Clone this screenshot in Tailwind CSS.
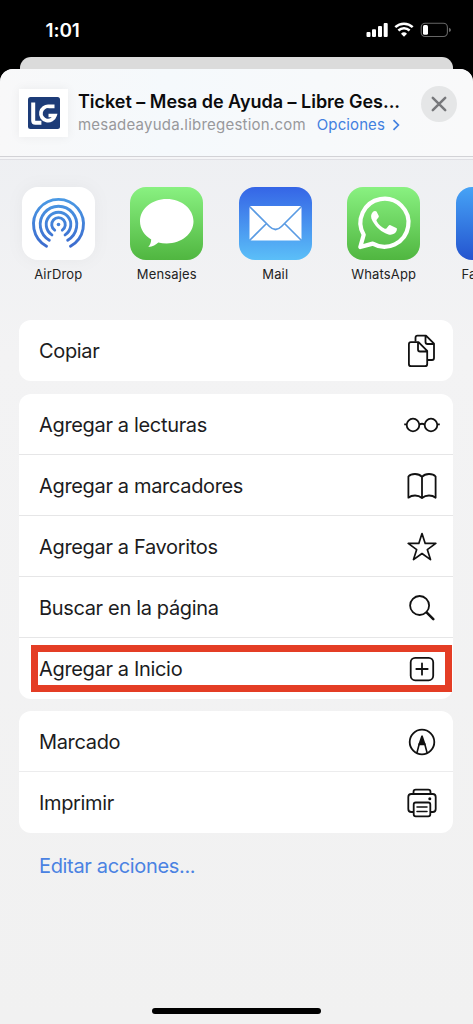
<!DOCTYPE html>
<html lang="es">
<head>
<meta charset="utf-8">
<title>Compartir</title>
<script src="https://cdn.jsdelivr.net/npm/@tailwindcss/browser@4"></script>
</head>
<body class="bg-black">
<div class="relative flex h-[1024px] w-[473px] flex-col overflow-hidden bg-black font-['Inter','Liberation_Sans',sans-serif] text-[#1c1c1e]">

  <!-- Status bar -->
  <div class="flex h-[57px] shrink-0 items-start justify-between pt-[21px] pr-[22px] pl-[45.500px] text-white">
    <span class="text-[19px] leading-[20px] font-semibold tracking-[-0.1px]">1:01</span>
    <svg class="mt-px h-[16px] w-[85px]" viewBox="366 22 85 16" fill="none">
      <g fill="#fff"><rect x="366.500" y="32" width="4" height="5" rx="1"/><rect x="372" y="29.300" width="4" height="7.700" rx="1"/><rect x="378" y="26" width="4" height="11" rx="1"/><rect x="383.700" y="23" width="4" height="14" rx="1"/></g>
      <path d="M395.300 27.200a12.700 12.700 0 0 1 17.400 0M398.400 30.500a8.200 8.200 0 0 1 11.200 0" stroke="#fff" stroke-width="2.500"/>
      <path d="M404 36.700l-3-3a4.300 4.300 0 0 1 6 0z" fill="#fff"/>
      <rect x="421.200" y="23.200" width="26.200" height="13.300" rx="4" stroke="#666" stroke-width="1.100"/>
      <rect x="423" y="25" width="5" height="9.700" rx="1.500" fill="#fff"/>
      <path d="M449 27.800q2 .8 2 2.100t-2 2.100z" fill="#666"/>
    </svg>
  </div>

  <!-- Card behind the sheet -->
  <div class="mx-5 h-3 shrink-0 rounded-t-[11px] bg-[#dbdbdb]"></div>

  <!-- Share sheet -->
  <div class="flex flex-1 flex-col rounded-t-[13px] bg-linear-to-b from-[#eceef2] via-[#f3f3f4] via-30% to-[#f1f1f1]">
    <header class="flex h-[88px] shrink-0 items-start rounded-t-[13px] border-b border-[#d2d2d6] bg-linear-to-r from-[#f8f8f9] via-[#f5f9fc] via-35% to-[#f9f9fa] pt-5 pl-[19px]">
      <div class="flex h-[48px] w-[49px] shrink-0 items-center justify-center bg-white shadow-[0_0_10px_rgba(0,0,0,0.06)]">
        <svg class="h-[32px] w-[32px]" viewBox="0 0 32 32" fill="none">
          <rect width="32" height="32" rx="2.500" fill="#1d3c78"/>
          <path d="M5.200 5.500v18q0 2.200 2.200 2.200h6" stroke="#fff" stroke-width="4"/>
          <path d="M26.500 9.300H21a7.200 7.200 0 1 0 6 9.200h-6.500" stroke="#fff" stroke-width="3.700"/>
        </svg>
      </div>
      <div class="ml-[10px] w-[330px] pt-[2px] whitespace-nowrap">
        <div class="text-[18px] leading-[22px] font-semibold tracking-[-0.02px] text-[#0b0b0c]">Ticket – Mesa de Ayuda – Libre Ges...</div>
        <div class="mt-px flex items-center text-[15px] leading-[22px]">
          <span class="tracking-[0.22px] text-[#98989b]">mesadeayuda.libregestion.com</span>
          <span class="ml-[11px] tracking-[0.1px] text-[#4280e0]">Opciones</span>
          <svg class="ml-[7px] h-[12px] w-[8px]" viewBox="0 0 8 12" fill="none"><path d="M1.500 1.200L6.400 6l-4.900 4.800" stroke="#4280e0" stroke-width="1.700"/></svg>
        </div>
      </div>
      <div class="mt-[-3px] ml-[13px] flex h-9 w-9 shrink-0 items-center justify-center rounded-full bg-[#e5e6e7]">
        <svg class="h-4 w-4" viewBox="0 0 16 16"><path d="M1.800 1.800l12.400 12.400M14.200 1.800L1.800 14.200" stroke="#77787b" stroke-width="2.500" stroke-linecap="round"/></svg>
      </div>
    </header>
    <div class="h-[2px] shrink-0 bg-[#f5f5f7]"></div>

    <!-- App row -->
    <div class="flex h-[161px] shrink-0 gap-[8px] overflow-hidden border-t border-[#dfdfe4] pt-[27px] pl-[8px] text-center text-[13px] leading-[18px] tracking-[0.15px] text-[#222]">
      <div class="flex w-[100.500px] shrink-0 flex-col items-center">
        <svg class="h-[73px] w-[73px] drop-shadow-[0_0_8px_rgba(0,0,0,0.04)]" viewBox="0 0 73 73" fill="none">
          <defs><linearGradient id="air" gradientUnits="userSpaceOnUse" x1="0" y1="10" x2="0" y2="62"><stop stop-color="#4b9be5"/><stop offset="1" stop-color="#3b69cd"/></linearGradient></defs>
          <rect width="73" height="73" rx="16" fill="#fff"/>
          <circle cx="36.500" cy="37.500" r="1.800" fill="url(#air)"/>
          <g stroke="url(#air)" stroke-width="2.900" stroke-linecap="round">
            <path d="M32.700 43.100a6.800 6.800 0 1 1 7.600 0"/>
            <path d="M29.900 47.900a12.300 12.300 0 1 1 13.200 0"/>
            <path d="M27.300 53.300a18.300 18.300 0 1 1 18.400 0"/>
            <path d="M24.500 59.300a25 25 0 1 1 24 0"/>
          </g>
        </svg>
        <span class="mt-[5px]">AirDrop</span>
      </div>
      <div class="flex w-[100.500px] shrink-0 flex-col items-center">
        <svg class="h-[73px] w-[73px]" viewBox="0 0 73 73">
          <defs><linearGradient id="green" x2="0" y2="1"><stop stop-color="#89f181"/><stop offset="1" stop-color="#50b640"/></linearGradient></defs>
          <rect width="73" height="73" rx="16" fill="url(#green)"/>
          <path d="M36.700 12C22 12 10 21.800 10 34.300c0 7.600 4.400 14.300 11.200 18.200-.1 3-1.300 5.500-2.900 7.500 4.200.1 7.700-2.300 10-4.500 2.600.7 5.400 1 8.400 1C51.500 56.500 63.500 46.700 63.500 34.300S51.500 12 36.700 12z" fill="#fff"/>
        </svg>
        <span class="mt-[5px]">Mensajes</span>
      </div>
      <div class="flex w-[100.500px] shrink-0 flex-col items-center">
        <svg class="h-[73px] w-[73px]" viewBox="0 0 73 73" fill="none">
          <defs><linearGradient id="mail" x2="0" y2="1"><stop stop-color="#3565e6"/><stop offset="1" stop-color="#5bbff8"/></linearGradient></defs>
          <rect width="73" height="73" rx="16" fill="url(#mail)"/>
          <rect x="10.500" y="19" width="52" height="34.500" rx="2" fill="#fff"/>
          <path d="M11 20l19.500 19.500q6 6 12 0L62 20M11 53l16.500-16.500M62 53L45.500 36.500" stroke="#5a9be3" stroke-width="1.700"/>
        </svg>
        <span class="mt-[5px]">Mail</span>
      </div>
      <div class="flex w-[100.500px] shrink-0 flex-col items-center">
        <svg class="h-[73px] w-[73px]" viewBox="0 0 73 73" fill="none">
          <rect width="73" height="73" rx="16" fill="url(#green)"/>
          <path d="M13.300 60l3.400-12.300a24 24 0 1 1 9 8.900z" stroke="#fff" stroke-width="4.200" stroke-linejoin="round"/>
          <path d="M29.500 24.400c-.7-.7-2.600-.8-3.700.5-2.200 2.300-2.300 5.500-.3 9 3.600 6.300 9 11.200 16 13.500 3.600 1.100 7.200-.8 8.200-3.800.4-1.500.3-2.100-.4-2.500l-5.800-2.900c-.8-.4-1.300-.2-1.900.6l-2.200 2.600c-.4.500-.9.600-1.600.3-3.600-1.500-6.400-4.200-8.200-7.600-.3-.6-.2-1 .2-1.500l1.800-2.300c.3-.5.3-1 .1-1.500z" fill="#fff"/>
        </svg>
        <span class="mt-[5px]">WhatsApp</span>
      </div>
      <div class="flex w-[100.500px] shrink-0 flex-col items-center">
        <svg class="h-[73px] w-[73px]" viewBox="0 0 73 73">
          <defs><linearGradient id="fb" x2="0" y2="1"><stop stop-color="#46a3f6"/><stop offset="1" stop-color="#2454cf"/></linearGradient></defs>
          <rect width="73" height="73" rx="16" fill="url(#fb)"/>
        </svg>
        <span class="mt-[5px]">Facebook</span>
      </div>
    </div>

    <!-- Actions -->
    <main class="flex flex-col pr-[20px] pl-[19px] text-[20px] tracking-[-0.34px]">
      <section class="rounded-xl bg-white">
        <div class="flex h-[61px] items-center justify-between pr-[13px] pl-5">
          <span>Copiar</span>
          <svg class="h-9 w-9" viewBox="0 0 36 36" fill="none" stroke="#111" stroke-width="1.800" stroke-linejoin="round">
            <path d="M11.500 8.500V4.700q0-2 2-2h8.500l8 8V25q0 2-2 2h-4.500M21.500 3v6q0 2 2 2H30"/>
            <path d="M6.900 9.200h7.600l8.700 8.700v13q0 2.300-2.300 2.300H7.200q-2.300 0-2.300-2.300V11.200q0-2 2-2zM14 9.500v7q0 2 2 2h7"/>
          </svg>
        </div>
      </section>

      <section class="mt-[13px] divide-y divide-[#e6e6e7] rounded-xl bg-white">
        <div class="flex h-[61px] items-center justify-between pt-px pr-[13px] pl-5">
          <span>Agregar a lecturas</span>
          <svg class="h-9 w-9" viewBox="0 0 36 36" fill="none" stroke="#111" stroke-width="1.800">
            <circle cx="9" cy="18" r="6.300"/><circle cx="27" cy="18" r="6.300"/>
            <path d="M15.300 17.500q2.700-1.500 5.400 0M2.900 17.300H.2M33.100 17.300h2.700"/>
          </svg>
        </div>
        <div class="flex h-[61px] items-center justify-between pt-[2px] pr-[13px] pl-5">
          <span>Agregar a marcadores</span>
          <svg class="h-9 w-9" viewBox="0 0 36 36" fill="none" stroke="#111" stroke-width="1.800" stroke-linejoin="round">
            <path d="M18 8.800Q15.500 6 11 6T4.400 8.500V29.700Q7 27.500 11 27.500T18 30Q21 27.500 25 27.500T31.600 29.700V8.500Q29.500 6 25 6T18 8.800zM18 8.800V30"/>
          </svg>
        </div>
        <div class="flex h-[61px] items-center justify-between pt-[2px] pr-[13px] pl-5">
          <span>Agregar a Favoritos</span>
          <svg class="h-9 w-9" viewBox="0 0 36 36" fill="none" stroke="#111" stroke-width="1.700" stroke-linejoin="round">
            <path d="M18 4.500l3.200 9.900h10.600l-8.500 6.200 3.200 10L18 24.500l-8.500 6.100 3.200-10-8.500-6.200h10.600z"/>
          </svg>
        </div>
        <div class="flex h-[61px] items-center justify-between pt-[2px] pr-[13px] pl-5">
          <span>Buscar en la página</span>
          <svg class="h-9 w-9" viewBox="0 0 36 36" fill="none" stroke="#111" stroke-linecap="round">
            <circle cx="15.600" cy="15.500" r="9.500" stroke-width="1.800"/><path d="M22.800 22.600l6.500 6.500" stroke-width="2.600"/>
          </svg>
        </div>
        <div class="relative flex h-[61px] items-center justify-between pt-px pr-[13px] pl-5">
          <span>Agregar a Inicio</span>
          <svg class="h-9 w-9" viewBox="0 0 36 36" fill="none" stroke="#111" stroke-width="1.800" stroke-linecap="round">
            <rect x="6.700" y="6.800" width="22.500" height="22.500" rx="4.500"/><path d="M18 12.300v11.400M12.300 18h11.400"/>
          </svg>
          <!-- Highlight over the last action -->
          <div class="absolute top-[7px] left-[12px] h-[47px] w-[421px] border-[7px] border-[#e43d25]"></div>
        </div>
      </section>

      <section class="mt-[12px] divide-y divide-[#ececed] rounded-xl bg-white">
        <div class="flex h-[61px] items-center justify-between pt-[2px] pr-[13px] pl-5">
          <span>Marcado</span>
          <svg class="h-9 w-9" viewBox="0 0 36 36" fill="none" stroke="#111" stroke-width="1.800" stroke-linejoin="round">
            <circle cx="18" cy="18" r="12.300"/><path d="M12.800 29.300l2.500-9.500h5.400l2.500 9.500" stroke-width="1.600"/><path d="M18 12.300l-2.700 8h5.400z" fill="#111"/>
          </svg>
        </div>
        <div class="flex h-[61px] items-center justify-between pr-[13px] pl-5">
          <span>Imprimir</span>
          <svg class="h-9 w-9" viewBox="0 0 36 36" fill="none" stroke="#111" stroke-width="1.800" stroke-linejoin="round">
            <path d="M9.500 9V7q0-2.300 2.300-2.300h12.400q2.300 0 2.300 2.300v2M9.500 27H7.300q-3 0-3-3V12q0-3 3-3h21.400q3 0 3 3v12q0 3-3 3h-2.200"/>
            <rect x="9.700" y="17.500" width="16.600" height="13.800" rx="2"/><path d="M13 22h10M13 26.500h10" stroke-linecap="round" stroke-width="1.500"/><circle cx="25.800" cy="13.700" r="1.500" fill="#111" stroke="none"/>
          </svg>
        </div>
      </section>

      <div class="mt-[19px] pl-5 leading-[28px] text-[#4a82e2]">Editar acciones...</div>
    </main>

    <div class="mt-auto mb-[10px] ml-[152px] h-[6px] w-[169px] rounded-full bg-black"></div>
  </div>
</div>
</body>
</html>
